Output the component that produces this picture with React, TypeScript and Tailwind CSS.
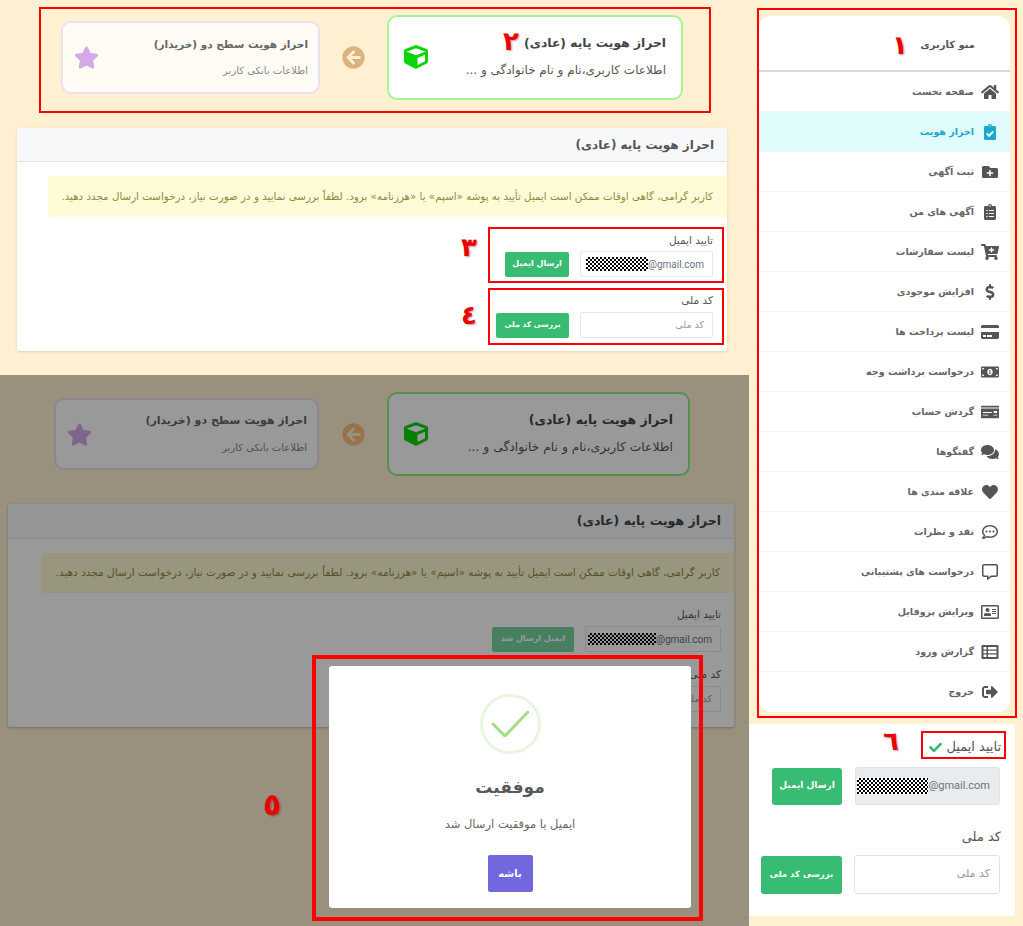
import React from "react";
import {
  FaHome, FaClipboardCheck, FaFolderPlus, FaClipboardList, FaCartPlus, FaDollarSign, FaCreditCard,
  FaMoneyBillAlt, FaMoneyCheck, FaComments, FaHeart, FaRegCommentDots, FaRegCommentAlt, FaRegAddressCard,
  FaSignOutAlt, FaCube, FaStar, FaArrowCircleLeft, FaCheck,
} from "react-icons/fa";

function ListTable({ className }: { className?: string }) {
  return (
    <svg viewBox="0 0 18 16" className={className} fill="currentColor">
      <path
        fillRule="evenodd"
        d="M1.5 1H16.5A1 1 0 0 1 17.5 2V14A1 1 0 0 1 16.5 15H1.5A1 1 0 0 1 .5 14V2A1 1 0 0 1 1.5 1ZM2.5 3V5.5H5.5V3ZM7 3V5.5H15.5V3ZM2.5 6.8V9.2H5.5V6.8ZM7 6.8V9.2H15.5V6.8ZM2.5 10.5V13H5.5V10.5ZM7 10.5V13H15.5V10.5Z"
      />
    </svg>
  );
}

const menu: [string, React.ComponentType<{ className?: string }>][] = [
  ["صفحه نخست", FaHome],
  ["احراز هویت", FaClipboardCheck],
  ["ثبت آگهی", FaFolderPlus],
  ["آگهی های من", FaClipboardList],
  ["لیست سفارشات", FaCartPlus],
  ["افزایش موجودی", FaDollarSign],
  ["لیست پرداخت ها", FaCreditCard],
  ["درخواست برداشت وجه", FaMoneyBillAlt],
  ["گردش حساب", FaMoneyCheck],
  ["گفتگوها", FaComments],
  ["علاقه مندی ها", FaHeart],
  ["نقد و نظرات", FaRegCommentDots],
  ["درخواست های پشتیبانی", FaRegCommentAlt],
  ["ویرایش پروفایل", FaRegAddressCard],
  ["گزارش ورود", ListTable],
  ["خروج", FaSignOutAlt],
];

const ALERT = "کاربر گرامی، گاهی اوقات ممکن است ایمیل تأیید به پوشه «اسپم» یا «هرزنامه» برود. لطفاً بررسی نمایید و در صورت نیاز، درخواست ارسال مجدد دهید.";

function Email({ size = "text-[10px]", block = "w-[62px] h-[14px]" }: { size?: string; block?: string }) {
  return (
    <span dir="ltr" className={`flex items-center font-['Roboto',sans-serif] text-[#6b7280] ${size}`}>
      <span className={`inline-block [background:repeating-conic-gradient(#000_0_25%,#fff_0_50%)_0_0/4px_4px] ${block}`} />
      @gmail.com
    </span>
  );
}

function Mark({ n, className }: { n: string; className: string }) {
  return (
    <span className={`absolute font-bold leading-none text-[#ee0000] [text-shadow:1px_1px_2px_rgba(0,0,0,0.35)] ${className}`}>
      {n}
    </span>
  );
}

function Purple({ className, title }: { className: string; title: string }) {
  return (
    <div className={`flex shrink-0 justify-between rounded-[10px] border-2 border-[#ecdff0] pl-[11px] pr-[10px] pt-[11px] ${className}`}>
      <FaStar className="mt-[11px] h-[25px] w-[25px] text-[#d3a9e8]" />
      <div dir="rtl" className="text-right">
        <div className={`${title} font-bold leading-[20px] text-[#666]`}>احراز هویت سطح دو (خریدار)</div>
        <div className="mt-[9px] text-[10px] leading-[16px] text-[#888]">اطلاعات بانکی کاربر</div>
      </div>
    </div>
  );
}

function Green({ className, title, sub }: { className: string; title: string; sub: string }) {
  return (
    <div className={`flex flex-1 justify-between rounded-[10px] border-2 bg-white pl-[15px] pr-[15px] pt-[14px] ${className}`}>
      <FaCube className="mt-[14px] h-[24px] w-[24px] text-[#0bd40b]" />
      <div dir="rtl" className="text-right">
        <div className={`${title} font-bold leading-[24px] text-[#444]`}>احراز هویت پایه (عادی)</div>
        <div className={`mt-[5px] ${sub} leading-[20px] text-[#555]`}>اطلاعات کاربری،نام و نام خانوادگی و ...</div>
      </div>
    </div>
  );
}

export default function App() {
  return (
    <div className="relative flex h-[926px] w-[1023px] overflow-hidden bg-[#fff0d2] font-['DejaVu_Sans',sans-serif]">
      <div className="flex w-[749px] shrink-0 flex-col">
        {/* top part */}
        <section className="h-[375px] shrink-0">
          <div className="ml-[39px] mt-[7px] flex h-[106px] w-[672px] items-start border-2 border-[#ff0000] pl-[20px] pr-[26px]">
            <Purple className="mt-[12px] h-[73px] w-[259px] bg-[#fffbf5]" title="text-[10.5px]" />
            <FaArrowCircleLeft className="mx-[22px] mt-[37px] h-[23px] w-[23px] shrink-0 text-[#dcb27f]" />
            <Green className="mt-[6px] h-[85px] border-[#a4f58f]" title="text-[12.3px]" sub="text-[12px]" />
          </div>
          <div className="ml-[17px] mt-[15px] h-[223px] w-[710px] rounded-[2px] bg-white shadow-[0_1px_3px_rgba(0,0,0,0.12)]">
            <div dir="rtl" className="flex h-[34px] items-center border-b border-[#e5e7eb] bg-[#f7f8fa] px-[13px] text-[12px] font-bold text-[#555]">
              احراز هویت پایه (عادی)
            </div>
            <div dir="rtl" className="ml-[31px] mt-[14px] flex h-[41px] items-center rounded-[3px] bg-[#fffbd6] px-[14px] text-[10.3px] text-[#8f883f] whitespace-nowrap">
              {ALERT}
            </div>
            <div className="ml-[471px] mt-[10px] h-[56px] w-[236px] border-2 border-[#ff0000] pl-[15px] pr-[9px]">
              <div dir="rtl" className="pt-[3px] text-[10.5px] leading-[16px] text-[#555]">تایید ایمیل</div>
              <div className="mt-[3px] flex items-center justify-between">
                <button className="h-[25px] w-[64px] rounded-[2px] bg-[#38bb72] text-[8px] font-bold text-white">ارسال ایمیل</button>
                <div className="flex h-[26px] w-[133px] items-center justify-end rounded-[2px] border border-[#e5e7eb] bg-white pr-[8px]"><Email /></div>
              </div>
            </div>
            <div className="ml-[471px] mt-[5px] h-[57px] w-[236px] border-2 border-[#ff0000] pl-[6px] pr-[9px]">
              <div dir="rtl" className="pt-[2px] text-[10.5px] leading-[16px] text-[#555]">کد ملی</div>
              <div className="mt-[4px] flex items-center justify-between">
                <button className="h-[25px] w-[73px] rounded-[2px] bg-[#38bb72] text-[7.5px] font-bold text-white">بررسی کد ملی</button>
                <div dir="rtl" className="flex h-[26px] w-[133px] items-center rounded-[2px] border border-[#e5e7eb] bg-white px-[8px] text-[9.5px] text-[#999]">کد ملی</div>
              </div>
            </div>
          </div>
        </section>

        {/* lower part: same page under a dark overlay */}
        <section className="relative flex-1">
          <div className="flex h-[101px] items-start pl-[54px] pr-[59px] pt-[17px]">
            <Purple className="mt-[6px] h-[72px] w-[265px] bg-white" title="text-[11px]" />
            <FaArrowCircleLeft className="ml-[23px] mr-[22px] mt-[31px] h-[23px] w-[23px] shrink-0 text-[#fdbf7c]" />
            <Green className="h-[84px] border-[#8ff07f]" title="text-[12.5px]" sub="text-[12.3px]" />
          </div>
          <div className="ml-[8px] mt-[28px] h-[223px] w-[726px] rounded-[2px] bg-white shadow-[0_1px_3px_rgba(0,0,0,0.25)]">
            <div dir="rtl" className="flex h-[35px] items-center border-b border-[#e5e7eb] bg-[#f7f8fa] px-[13px] text-[12.5px] font-bold text-[#444]">
              احراز هویت پایه (عادی)
            </div>
            <div dir="rtl" className="ml-[33px] mt-[14px] flex h-[40px] items-center bg-[#fffbd6] px-[14px] text-[10.5px] text-[#8f883f] whitespace-nowrap">
              {ALERT}
            </div>
            <div dir="rtl" className="mt-[13px] pr-[13px] text-[10.5px] leading-[16px] text-[#555]">تایید ایمیل</div>
            <div className="mt-[4px] flex items-center justify-end pr-[13px]">
              <button className="mr-[11px] h-[25px] w-[82px] rounded-[2px] bg-[#77d49f] text-[8px] font-bold text-white">ایمیل ارسال شد</button>
              <div className="flex h-[26px] w-[136px] items-center justify-end rounded-[2px] border border-[#e5e7eb] bg-white pr-[8px]"><Email block="w-[68px] h-[12px]" /></div>
            </div>
            <div dir="rtl" className="mt-[14px] pr-[13px] text-[10.5px] leading-[16px] text-[#555]">کد ملی</div>
            <div className="mt-[4px] flex justify-end pr-[13px]">
              <div dir="rtl" className="flex h-[26px] w-[136px] items-center rounded-[2px] border border-[#e5e7eb] bg-white px-[8px] text-[9.5px] text-[#999]">کد ملی</div>
            </div>
          </div>
          <div className="absolute inset-0 bg-[rgba(0,0,0,0.4)]" />
          {/* success dialog with its annotation frame */}
          <div className="absolute left-[312px] top-[280px] h-[266px] w-[391px] border-4 border-[#ff0000] pl-[13px] pt-[7px]">
            <div className="flex h-[242px] w-[362px] flex-col items-center rounded-[3px] bg-white pt-[28px]">
              <div className="flex h-[60px] w-[61px] items-center justify-center rounded-full border-[3px] border-[#e9f6e0]">
                <svg viewBox="0 0 37 26" className="h-[26px] w-[37px]" fill="none" stroke="#a5dc86" strokeWidth="3" strokeLinecap="round">
                  <path d="M1 13 L13 25 L36 1" />
                </svg>
              </div>
              <div dir="rtl" className="mt-[19px] text-[17px] font-bold leading-[28px] text-[#595959]">موفقیت</div>
              <div dir="rtl" className="mt-[14px] text-[11.5px] leading-[18px] text-[#666]">ایمیل با موفقیت ارسال شد</div>
              <button className="mt-[22px] h-[37px] w-[45px] rounded-[2px] bg-[#7367e0] text-[10px] font-bold text-white">باشه</button>
            </div>
          </div>
        </section>
      </div>

      {/* right column */}
      <div className="flex flex-1 flex-col">
        <div className="ml-[8px] mt-[8px] h-[710px] w-[260px] border-2 border-[#ff0000] pt-[6px]">
          <div className="w-[251px] rounded-[12px] bg-white">
            <div dir="rtl" className="flex h-[56px] items-center border-b-2 border-[#d9d9d9] pr-[35px] pt-[2px] text-[10px] font-bold text-[#555]">
              منو کاربری
            </div>
            {menu.map(([label, Icon], i) => {
              const active = i === 1;
              return (
                <div
                  key={label}
                  dir="rtl"
                  className={`flex h-[40px] items-center border-b border-[#f6f6f6] pr-[9px] text-[9.5px] font-bold last:border-b-0 ${active ? "bg-[#dffbfc] text-[#1ba8cc]" : "text-[#666]"}`}
                >
                  <span className="flex w-[22px] shrink-0 justify-center">
                    <Icon className={`h-[16px] w-[18px] ${active ? "text-[#1ba8cc]" : "text-[#555]"}`} />
                  </span>
                  <span className="mr-[5px] pt-[1px]">{label}</span>
                </div>
              );
            })}
          </div>
        </div>
        <div className="mt-[6px] h-[192px] w-[266px] bg-white">
          <div className="ml-[172px] mt-[7px] flex h-[28px] w-[85px] items-center justify-end gap-[4px] border-2 border-[#ff0000] pr-[3px] pt-[4px] text-[13px] text-[#555]">
            <FaCheck className="h-[13px] w-[13px] text-[#38bb72]" />
            <span dir="rtl">تایید ایمیل</span>
          </div>
          <div className="ml-[23px] mt-[8px] flex w-[228px] items-center justify-between">
            <button className="h-[37px] w-[70px] rounded-[3px] bg-[#38bb72] text-[9px] font-bold text-white">ارسال ایمیل</button>
            <div className="flex h-[38px] w-[145px] items-center justify-end rounded-[3px] border border-[#dfe3e8] bg-[#e9ecef] pr-[9px]">
              <Email size="text-[11px]" block="w-[71px] h-[16px]" />
            </div>
          </div>
          <div dir="rtl" className="mr-[14px] mt-[22px] text-[13px] leading-[20px] text-[#555]">کد ملی</div>
          <div className="ml-[12px] mt-[8px] flex w-[239px] items-center justify-between">
            <button className="h-[38px] w-[81px] whitespace-nowrap rounded-[3px] bg-[#38bb72] text-[8.5px] font-bold text-white">بررسی کد ملی</button>
            <div dir="rtl" className="flex h-[39px] w-[146px] items-center rounded-[3px] border border-[#dfe3e8] bg-white px-[9px] text-[11px] text-[#999]">کد ملی</div>
          </div>
        </div>
      </div>

      <Mark n="١" className="left-[892px] top-[32px] text-[26px]" />
      <Mark n="٢" className="left-[503px] top-[28px] text-[26px]" />
      <Mark n="٣" className="left-[461px] top-[234px] text-[26px]" />
      <Mark n="٤" className="left-[461px] top-[302px] text-[26px]" />
      <Mark n="٥" className="left-[263px] top-[790px] text-[30px]" />
      <Mark n="٦" className="left-[883px] top-[728px] text-[26px]" />
    </div>
  );
}
